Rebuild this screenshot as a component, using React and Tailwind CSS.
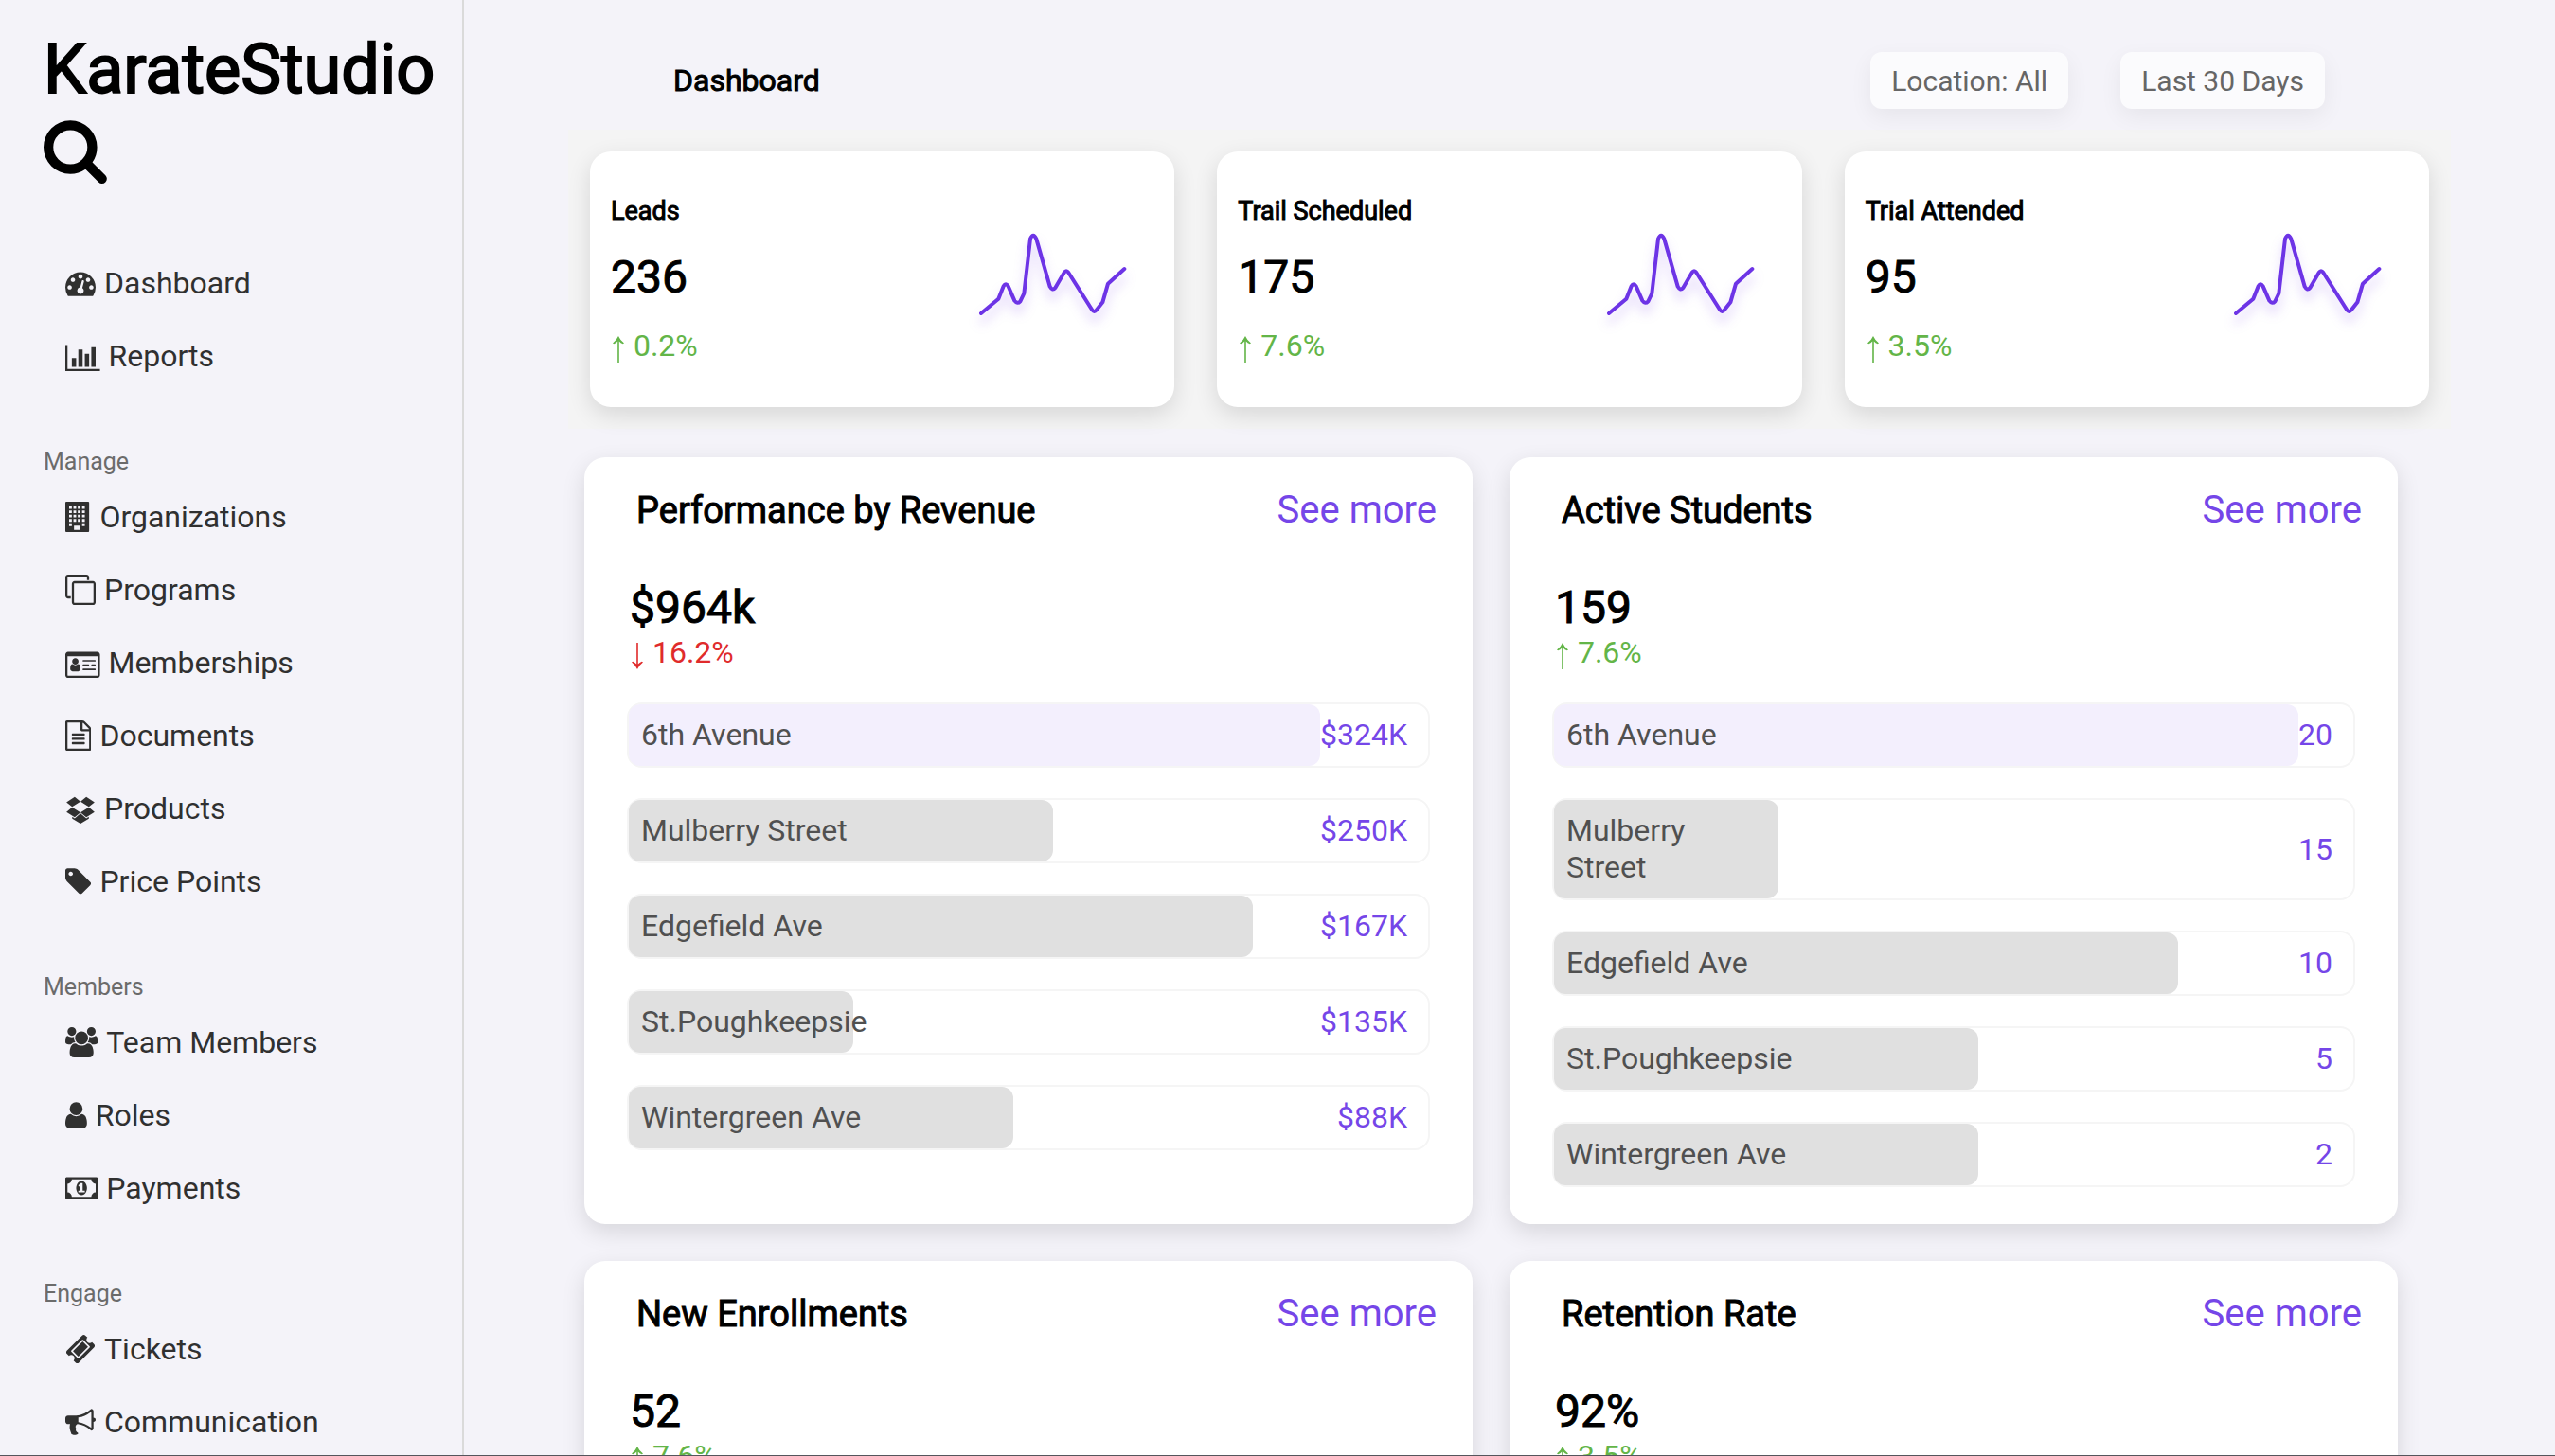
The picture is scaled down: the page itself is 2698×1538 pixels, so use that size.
const ICONS = {
  search: {
    box: "64 0 1664 1792",
    d: "M1216 832q0-185-131.5-316.5t-316.5-131.5-316.5 131.5-131.5 316.5 131.5 316.5 316.5 131.5 316.5-131.5 131.5-316.5zm512 832q0 52-38 90t-90 38q-54 0-90-38l-343-342q-179 124-399 124-143 0-273.5-55.5t-225-150-150-225-55.5-273.5 55.5-273.5 150-225 225-150 273.5-55.5 273.5 55.5 225 150 150 225 55.5 273.5q0 220-124 399l343 343q37 37 37 90z",
  },
  dashboard: {
    box: "0 0 1792 1792",
    d: "M384 1152q0-53-37.5-90.5t-90.5-37.5-90.5 37.5-37.5 90.5 37.5 90.5 90.5 37.5 90.5-37.5 37.5-90.5zm192-448q0-53-37.5-90.5t-90.5-37.5-90.5 37.5-37.5 90.5 37.5 90.5 90.5 37.5 90.5-37.5 37.5-90.5zm428 481l101-382q6-26-7.5-48.5t-38.5-29.5-48 6.5-30 39.5l-101 382q-60 5-107 43.5t-63 98.5q-20 77 20 146t117 89 146-20 89-117q16-60-6-117t-72-91zm660-33q0-53-37.5-90.5t-90.5-37.5-90.5 37.5-37.5 90.5 37.5 90.5 90.5 37.5 90.5-37.5 37.5-90.5zm-640-640q0-53-37.5-90.5t-90.5-37.5-90.5 37.5-37.5 90.5 37.5 90.5 90.5 37.5 90.5-37.5 37.5-90.5zm448 192q0-53-37.5-90.5t-90.5-37.5-90.5 37.5-37.5 90.5 37.5 90.5 90.5 37.5 90.5-37.5 37.5-90.5zm320 448q0 261-141 483-19 29-54 29h-1402q-35 0-54-29-141-221-141-483 0-182 71-348t191-286 286-191 348-71 348 71 286 191 191 286 71 348z",
  },
  chart: {
    box: "0 0 2048 1792",
    d: "M640 1024v512h-256v-512h256zm384-512v1024h-256v-1024h256zm1024 1152v128h-2048v-1536h128v1408h1920zm-640-896v768h-256v-768h256zm384-384v1152h-256v-1152h256z",
  },
  building: {
    box: "0 0 1536 1792",
    d: "M64 0h1280q26 0 45 19t19 45v1664q0 26-19 45t-45 19h-1280q-26 0-45-19t-19-45v-1664q0-26 19-45t45-19zM224 256v160h160v-160zM480 256v160h160v-160zM736 256v160h160v-160zM992 256v160h160v-160zM224 512v160h160v-160zM480 512v160h160v-160zM736 512v160h160v-160zM992 512v160h160v-160zM224 768v160h160v-160zM480 768v160h160v-160zM736 768v160h160v-160zM992 768v160h160v-160zM224 1024v160h160v-160zM480 1024v160h160v-160zM736 1024v160h160v-160zM992 1024v160h160v-160zM224 1280v160h160v-160zM992 1280v160h160v-160zM512 1408v256h384v-256z",
  },
  clone: {
    box: "0 0 1792 1792",
    d: "M1664 1632v-1088q0-13-9.5-22.5t-22.5-9.5h-1088q-13 0-22.5 9.5t-9.5 22.5v1088q0 13 9.5 22.5t22.5 9.5h1088q13 0 22.5-9.5t9.5-22.5zm128-1088v1088q0 66-47 113t-113 47h-1088q-66 0-113-47t-47-113v-1088q0-66 47-113t113-47h1088q66 0 113 47t47 113zm-384-384v160h-128v-160q0-13-9.5-22.5t-22.5-9.5h-1088q-13 0-22.5 9.5t-9.5 22.5v1088q0 13 9.5 22.5t22.5 9.5h160v128h-160q-66 0-113-47t-47-113v-1088q0-66 47-113t113-47h1088q66 0 113 47t47 113z",
  },
  card: {
    box: "0 0 2048 1792",
    d: "M160 256h1728q66 0 113 47t47 113v1216q0 66-47 113t-113 47h-1728q-66 0-113-47t-47-113v-1216q0-66 47-113t113-47zM128 512v1120q0 13 9.5 22.5t22.5 9.5h1728q13 0 22.5-9.5t9.5-22.5v-1120zM420 1408q-58 0-95-43t-37-105q0-150 34-212t108-62q70 62 162 62t162-62q74 0 108 62t34 212q0 62-37 105t-95 43zM592 1012q-80 0-134-54t-54-134 54-134 134-54 134 54 54 134-54 134-134 54zM1056 736h704q32 0 32 32v32q0 32-32 32h-704q-32 0-32-32v-32q0-32 32-32zM1056 992h320q32 0 32 32v32q0 32-32 32h-320q-32 0-32-32v-32q0-32 32-32zM1568 992h192q32 0 32 32v32q0 32-32 32h-192q-32 0-32-32v-32q0-32 32-32zM1056 1248h704q32 0 32 32v32q0 32-32 32h-704q-32 0-32-32v-32q0-32 32-32z",
  },
  document: {
    box: "128 0 1536 1792",
    d: "M1596 380q28 28 48 76t20 88v1152q0 40-28 68t-68 28h-1344q-40 0-68-28t-28-68v-1600q0-40 28-68t68-28h896q40 0 88 20t76 48zm-444-244v376h376q-10-29-22-41l-313-313q-12-12-41-22zm384 1528v-1024h-416q-40 0-68-28t-28-68v-416h-768v1536h1280zm-1024-864q0-14 9-23t23-9h704q14 0 23 9t9 23v64q0 14-9 23t-23 9h-704q-14 0-23-9t-9-23v-64zm736 224q14 0 23 9t9 23v64q0 14-9 23t-23 9h-704q-14 0-23-9t-9-23v-64q0-14 9-23t23-9h704zm0 256q14 0 23 9t9 23v64q0 14-9 23t-23 9h-704q-14 0-23-9t-9-23v-64q0-14 9-23t23-9h704z",
  },
  dropbox: {
    box: "0 0 1792 1792",
    d: "M402 829l494 305-342 285-490-319zm986 555v108l-490 293v1l-1-1-1 1v-1l-489-293v-108l147 96 342-284v-2l1 1 1-1v2l343 284zm-834-1178l342 285-494 304-338-270zm836 623l338 271-489 319-343-285zm-151-623l489 319-338 270-494-304z",
  },
  tag: {
    box: "128 0 1536 1792",
    d: "M576 448q0-53-37.5-90.5t-90.5-37.5-90.5 37.5-37.5 90.5 37.5 90.5 90.5 37.5 90.5-37.5 37.5-90.5zm1067 576q0 53-37 90l-491 492q-39 37-91 37-53 0-90-37l-715-716q-38-37-64.5-101t-26.5-117v-416q0-52 38-90t90-38h416q53 0 117 26.5t102 64.5l715 714q37 39 37 91z",
  },
  users: {
    box: "0 0 1920 1792",
    d: "M593 896q-162 5-265 128h-134q-82 0-138-40.5t-56-118.5q0-353 124-353 6 0 43.5 21t97.5 42.5 119 21.5q67 0 133-23-5 37-5 66 0 139 81 256zm1071 637q0 120-73 189.5t-194 69.5h-874q-121 0-194-69.5t-73-189.5q0-53 3.5-103.5t14-109 26.5-108.5 43-97.5 62-81 85.5-53.5 111.5-20q10 0 43 21.5t73 48 107 48 135 21.5 135-21.5 107-48 73-48 43-21.5q61 0 111.5 20t85.5 53.5 62 81 43 97.5 26.5 108.5 14 109 3.5 103.5zm-1024-1277q0 106-75 181t-181 75-181-75-75-181 75-181 181-75 181 75 75 181zm704 384q0 159-112.5 271.5t-271.5 112.5-271.5-112.5-112.5-271.5 112.5-271.5 271.5-112.5 271.5 112.5 112.5 271.5zm576 225q0 78-56 118.5t-138 40.5h-134q-103-123-265-128 81-117 81-256 0-29-5-66 66 23 133 23 59 0 119-21.5t97.5-42.5 43.5-21q124 0 124 353zm-128-609q0 106-75 181t-181 75-181-75-75-181 75-181 181-75 181 75 75 181z",
  },
  user: {
    box: "256 0 1280 1792",
    d: "M1536 1399q0 109-62.5 187t-150.5 78h-854q-88 0-150.5-78t-62.5-187q0-85 8.5-160.5t31.5-152 58.5-131 94-89 134.5-34.5q131 128 313 128t313-128q76 0 134.5 34.5t94 89 58.5 131 31.5 152 8.5 160.5zm-256-887q0 159-112.5 271.5t-271.5 112.5-271.5-112.5-112.5-271.5 112.5-271.5 271.5-112.5 271.5 112.5 112.5 271.5z",
  },
  money: {
    box: "0 0 1920 1792",
    d: "M768 1152h384v-96h-128v-448h-114l-148 137 77 80q42-37 55-57h2v288h-128v96zm512-256q0 70-21 142t-59.5 134-101.5 101-138 39-138-39-101.5-101-59.5-134-21-142 21-142 59.5-134 101.5-101 138-39 138 39 101.5 101 59.5 134 21 142zm512 256v-512q-106 0-181-75t-75-181h-1152q0 106-75 181t-181 75v512q106 0 181 75t75 181h1152q0-106 75-181t181-75zm128-832v1152q0 26-19 45t-45 19h-1792q-26 0-45-19t-19-45v-1152q0-26 19-45t45-19h1792q26 0 45 19t19 45z",
  },
  ticket: {
    box: "0 0 1792 1792",
    d: "M1024 452l316 316-572 572-316-316zm-211 979l618-618q19-19 19-45t-19-45l-362-362q-18-18-45-18t-45 18l-618 618q-19 19-19 45t19 45l362 362q18 18 45 18t45-18zm889-637l-907 908q-37 37-90.5 37t-90.5-37l-126-126q56-56 56-136t-56-136-136-56-136 56l-125-126q-37-37-37-90.5t37-90.5l907-906q37-37 90.5-37t90.5 37l125 125q-56 56-56 136t56 136 136 56 136-56l126 125q37 37 37 90.5t-37 90.5z",
  },
  bullhorn: {
    box: "0 0 1792 1792",
    d: "M1664 640q53 0 90.5 37.5t37.5 90.5-37.5 90.5-90.5 37.5v384q0 52-38 90t-90 38q-417-347-812-380-58 19-91 66t-31 100.5 40 92.5q-20 33-23 65.5t6 58 33.5 55 48 50 61.5 50.5q-29 58-111.5 83t-168.5 11.5-132-55.5q-7-23-29.5-87.5t-32-94.5-23-89-15-101 3.5-98.5 22-110.5h-122q-66 0-113-47t-47-113v-192q0-66 47-113t113-47h480q435 0 896-384 52 0 90 38t38 90v384zm-128 604v-954q-394 302-768 343v270q377 42 768 341z",
  },
};

function Icon({ name, className }) {
  const { box, d } = ICONS[name];
  return (
    <svg viewBox={box} className={className} fill="currentColor" fillRule="evenodd" aria-hidden="true">
      <path d={d} />
    </svg>
  );
}

const NAV = [
  {
    items: [
      ["dashboard", "Dashboard"],
      ["chart", "Reports"],
    ],
  },
  {
    label: "Manage",
    items: [
      ["building", "Organizations"],
      ["clone", "Programs"],
      ["card", "Memberships"],
      ["document", "Documents"],
      ["dropbox", "Products"],
      ["tag", "Price Points"],
    ],
  },
  {
    label: "Members",
    items: [
      ["users", "Team Members"],
      ["user", "Roles"],
      ["money", "Payments"],
    ],
  },
  {
    label: "Engage",
    items: [
      ["ticket", "Tickets"],
      ["bullhorn", "Communication"],
    ],
  },
];

const STATS = [
  { title: "Leads", value: "236", delta: "0.2%" },
  { title: "Trail Scheduled", value: "175", delta: "7.6%" },
  { title: "Trial Attended", value: "95", delta: "3.5%" },
];

const PANELS = [
  {
    title: "Performance by Revenue",
    value: "$964k",
    delta: "16.2%",
    down: true,
    rows: [
      ["6th Avenue", 100, "$324K"],
      ["Mulberry Street", 50, "$250K"],
      ["Edgefield Ave", 75, "$167K"],
      ["St.Poughkeepsie", 25, "$135K"],
      ["Wintergreen Ave", 45, "$88K"],
    ],
  },
  {
    title: "Active Students",
    value: "159",
    delta: "7.6%",
    rows: [
      ["6th Avenue", 100, "20"],
      ["Mulberry Street", 25, "15"],
      ["Edgefield Ave", 75, "10"],
      ["St.Poughkeepsie", 50, "5"],
      ["Wintergreen Ave", 50, "2"],
    ],
  },
  { title: "New Enrollments", value: "52", delta: "7.6%", rows: [] },
  { title: "Retention Rate", value: "92%", delta: "3.5%", rows: [] },
];

function Sidebar() {
  return (
    <aside className="w-[490px] shrink-0 border-r-2 border-[#dadada] pt-8">
      <div className="pl-[46px]">
        <h1 className="text-[72px] leading-[84px] font-normal text-black [-webkit-text-stroke:2px_black]">
          KarateStudio
        </h1>
        <button type="button" aria-label="Search" className="mt-1.5 block text-black">
          <Icon name="search" className="h-[72px] w-auto" />
        </button>
      </div>
      <nav className="mt-[66px]">
        {NAV.map((group, i) => (
          <section key={i} className="mb-[59px]">
            {group.label && (
              <h2 className="mb-1 pl-[46px] text-[25px] leading-[30px] font-normal text-[#6b6b6b]">{group.label}</h2>
            )}
            <ul className="pl-[69px]">
              {group.items.map(([icon, label]) => (
                <li key={label}>
                  <a href="#" className="flex h-[77px] items-center gap-[9px] text-[32px] text-[#303030]">
                    <Icon name={icon} className="h-8 w-auto" />
                    {label}
                  </a>
                </li>
              ))}
            </ul>
          </section>
        ))}
      </nav>
    </aside>
  );
}

function Arrow({ down }) {
  return (
    <svg
      viewBox="0 0 16 28"
      className="inline-block h-7 w-4 align-[-7px]"
      fill="currentColor"
      role="img"
      aria-label={down ? "Down" : "Up"}
    >
      <path
        d={
          down
            ? "M8 28Q6 23.500 2 20.500L3.200 19.700Q5.700 20.800 7.200 22.600V0H8.800V22.600Q10.300 20.800 12.800 19.700L14 20.500Q10 23.500 8 28Z"
            : "M8 0Q6 4.500 2 7.500L3.200 8.300Q5.700 7.200 7.200 5.400V28H8.800V5.400Q10.300 7.200 12.800 8.300L14 7.500Q10 4.500 8 0Z"
        }
      />
    </svg>
  );
}

function Delta({ down, children }) {
  return (
    <p className={down ? "text-[32px] leading-[38px] text-[#e02b2b]" : "text-[32px] leading-[38px] text-[#63b548]"}>
      <Arrow down={down} /> {children}
    </p>
  );
}

function Sparkline() {
  return (
    <svg
      viewBox="0 18 600 420"
      className="w-[200px] shrink-0 drop-shadow-[0_9px_6px_rgba(107,45,232,0.25)]"
      fill="none"
      stroke="#6d34e6"
      strokeWidth="12"
      strokeLinecap="round"
      strokeLinejoin="round"
      aria-hidden="true"
    >
      <path d="M78 333L133 287L149 247Q156 235 164 247L184 293Q193 305 202 295L214 270L234 97Q243 75 253 97L296 248Q304 263 313 252L341 204Q348 194 355 204L429 321Q436 332 444 322L463 298L480 239L532 192" />
    </svg>
  );
}

function StatCard({ title, value, delta }) {
  return (
    <article className="flex items-center justify-between rounded-[22px] bg-white pt-12 pr-[30px] pb-[46px] pl-[22px] shadow-[0_8px_24px_rgba(0,0,0,0.12)]">
      <div>
        <h3 className="text-[27px] leading-[30px] font-normal text-black [-webkit-text-stroke:1px_black]">{title}</h3>
        <p className="mt-[27px] mb-[25px] text-5xl leading-[56px] text-black [-webkit-text-stroke:1px_black]">{value}</p>
        <Delta>{delta}</Delta>
      </div>
      <Sparkline />
    </article>
  );
}

function BarRow({ label, percent, value, highlight }) {
  return (
    <li className="flex items-stretch justify-between rounded-2xl border-2 border-[#f5f5f5] text-[32px] leading-[39px]">
      <div
        className={
          highlight
            ? "min-w-0 rounded-xl bg-[#f3effd] p-[13px] text-[#505050]"
            : "min-w-0 rounded-xl bg-[#e0e0e0] p-[13px] text-[#505050]"
        }
        style={{ width: `calc(${percent}% + 26px)` }}
      >
        {label}
      </div>
      <div className="flex shrink-0 items-center pr-[22px] text-[#7546e8]">{value}</div>
    </li>
  );
}

function Panel({ title, value, delta, down, rows }) {
  return (
    <article className="rounded-[22px] bg-white px-[45px] pt-[33px] pb-[39px] shadow-[0_8px_24px_rgba(0,0,0,0.12)]">
      <header className="-mr-[7px] flex items-baseline justify-between pl-2.5 leading-[46px]">
        <h2 className="text-[38px] font-normal text-black [-webkit-text-stroke:1px_black]">{title}</h2>
        <a href="#" className="text-[40px] text-[#7546e8]">
          See more
        </a>
      </header>
      <div className="mt-[52px] pl-[3px]">
        <p className="text-5xl leading-[56px] text-black [-webkit-text-stroke:1px_black]">{value}</p>
        <Delta down={down}>{delta}</Delta>
      </div>
      <ul className="mt-[34px] flex flex-col gap-8">
        {rows.map(([label, percent, amount], i) => (
          <BarRow key={label} label={label} percent={percent} value={amount} highlight={i === 0} />
        ))}
      </ul>
    </article>
  );
}

export default function App() {
  return (
    <div className="flex h-screen overflow-hidden border-b border-[#55555c] bg-[#f4f3f9] font-['Roboto','Liberation_Sans',sans-serif]">
      <Sidebar />
      <main className="min-w-0 flex-1">
        <header className="flex items-center justify-between pt-[55px] pr-[243px] pb-[22px] pl-[221px]">
          <h2 className="text-[32px] leading-[38px] font-normal text-black [-webkit-text-stroke:1px_black]">
            Dashboard
          </h2>
          <div className="flex gap-[55px] text-[30px] text-[#666]">
            <button type="button" className="h-[60px] rounded-xl bg-[#fbfbfd] px-[22px] shadow-[0_8px_24px_rgba(0,0,0,0.06)]">
              Location: All
            </button>
            <button type="button" className="h-[60px] rounded-xl bg-[#fbfbfd] px-[22px] shadow-[0_8px_24px_rgba(0,0,0,0.06)]">
              Last 30 Days
            </button>
          </div>
        </header>
        <section className="mx-[110px] grid grid-cols-3 gap-[45px] bg-[#f4f4f4] p-[23px]">
          {STATS.map((stat) => (
            <StatCard key={stat.title} {...stat} />
          ))}
        </section>
        <section className="mt-[30px] mr-[166px] ml-[127px] grid grid-cols-2 gap-[39px]">
          {PANELS.map((panel) => (
            <Panel key={panel.title} {...panel} />
          ))}
        </section>
      </main>
    </div>
  );
}
